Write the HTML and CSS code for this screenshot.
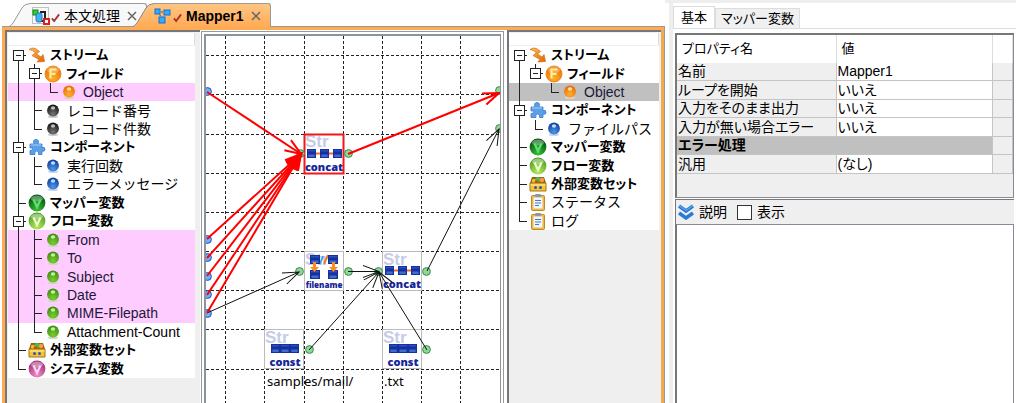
FILE: index.html
```
<!DOCTYPE html>
<html lang="ja">
<head>
    <meta charset="UTF-8">
    <meta name="viewport" content="width=device-width, initial-scale=1.0">
    <title>Mapper1</title>
    <link rel="stylesheet" href="styles.css">
</head>
<body>
    <!-- アイコン定義 -->
    <svg class="defs" width="0" height="0" aria-hidden="true">
        <defs>
            <radialGradient id="gOrange" cx="50%" cy="75%" r="75%"><stop offset="0" stop-color="#ffb030"/><stop offset="1" stop-color="#e86a00"/></radialGradient>
            <radialGradient id="gBlack" cx="50%" cy="80%" r="75%"><stop offset="0" stop-color="#777"/><stop offset="1" stop-color="#151515"/></radialGradient>
            <radialGradient id="gBlue" cx="50%" cy="80%" r="75%"><stop offset="0" stop-color="#4c98ec"/><stop offset="1" stop-color="#12409c"/></radialGradient>
            <radialGradient id="gGreen" cx="50%" cy="80%" r="75%"><stop offset="0" stop-color="#7ecb30"/><stop offset="1" stop-color="#3c9014"/></radialGradient>
            <radialGradient id="gDark" cx="50%" cy="85%" r="80%"><stop offset="0" stop-color="#35c035"/><stop offset="1" stop-color="#04500c"/></radialGradient>
            <radialGradient id="gLime" cx="50%" cy="85%" r="80%"><stop offset="0" stop-color="#b4ea60"/><stop offset="1" stop-color="#4c9c20"/></radialGradient>
            <radialGradient id="gPink" cx="50%" cy="85%" r="80%"><stop offset="0" stop-color="#f090c8"/><stop offset="1" stop-color="#a02878"/></radialGradient>
            <linearGradient id="gStream" x1="0" y1="0" x2="1" y2="1"><stop offset="0" stop-color="#ffc060"/><stop offset="1" stop-color="#e06400"/></linearGradient>
            <linearGradient id="gTab" x1="0" y1="0" x2="0" y2="1"><stop offset="0" stop-color="#ffc684"/><stop offset="1" stop-color="#ffab55"/></linearGradient>
            <linearGradient id="gBox" x1="0" y1="0" x2="0" y2="1"><stop offset="0" stop-color="#1230a0"/><stop offset="1" stop-color="#5a90e0"/></linearGradient>
        </defs>
        <symbol id="ball-orange" viewBox="0 0 12 14"><ellipse cx="6" cy="12.500" rx="5" ry="1.500" fill="#e0d0c8"/><circle cx="6" cy="6.500" r="5.900" fill="url(#gOrange)"/><ellipse cx="6" cy="4" rx="2.200" ry="1.700" fill="#ffe0a0"/></symbol>
        <symbol id="ball-black" viewBox="0 0 12 14"><ellipse cx="6" cy="12.500" rx="5" ry="1.500" fill="#ccc"/><circle cx="6" cy="6.500" r="5.900" fill="url(#gBlack)"/><ellipse cx="6" cy="4" rx="2.200" ry="1.700" fill="#bbb"/></symbol>
        <symbol id="ball-blue" viewBox="0 0 12 14"><ellipse cx="6" cy="12.500" rx="5" ry="1.500" fill="#c8d4e8"/><circle cx="6" cy="6.500" r="5.900" fill="url(#gBlue)"/><ellipse cx="6" cy="4" rx="2.200" ry="1.700" fill="#bcdcff"/></symbol>
        <symbol id="ball-green" viewBox="0 0 12 14"><ellipse cx="6" cy="12.500" rx="5" ry="1.500" fill="#ccd8c0"/><circle cx="6" cy="6.500" r="5.900" fill="url(#gGreen)"/><ellipse cx="6" cy="4" rx="2.200" ry="1.700" fill="#c8f0a0"/></symbol>
        <symbol id="field" viewBox="0 0 18 18"><circle cx="9" cy="9" r="8" fill="url(#gOrange)" stroke="#f08a20"/><ellipse cx="9" cy="5" rx="6" ry="3.5" fill="#fff" opacity=".3"/><path d="M6.5 13.5V4.5H12.5M6.5 9H11.5" fill="none" stroke="#ffef90" stroke-width="2.2"/></symbol>
        <symbol id="var-dark" viewBox="0 0 18 18"><circle cx="9" cy="9" r="8.4" fill="url(#gDark)"/><ellipse cx="9" cy="4.5" rx="6" ry="3" fill="#fff" opacity=".35"/><path d="M5.5 5.5L9 13L12.5 5.5" fill="none" stroke="#5be070" stroke-width="2.4"/></symbol>
        <symbol id="var-lime" viewBox="0 0 18 18"><circle cx="9" cy="9" r="8.4" fill="url(#gLime)"/><ellipse cx="9" cy="4.5" rx="6" ry="3" fill="#fff" opacity=".4"/><path d="M5.5 5.5L9 13L12.5 5.5" fill="none" stroke="#f0ffc8" stroke-width="2.2"/></symbol>
        <symbol id="var-pink" viewBox="0 0 18 18"><circle cx="9" cy="9" r="8.4" fill="url(#gPink)"/><ellipse cx="9" cy="4.5" rx="6" ry="3" fill="#fff" opacity=".4"/><path d="M5.5 5.5L9 13L12.5 5.5" fill="none" stroke="#ffd8f4" stroke-width="2.2"/></symbol>
        <symbol id="stream" viewBox="0 0 18 18"><path d="M1 3.500Q4 1 7.500 2.500L11.500 5.500L8.500 8L13 11L15 8.500L16.500 15.500L9 16L11 13.500L4 9.500L7.500 6.800Q4.500 4 1 3.500Z" fill="url(#gStream)" stroke="#d86a10" stroke-width=".7"/></symbol>
        <symbol id="puzzle" viewBox="0 0 18 18"><path d="M2 6H6Q4.500 1.500 8 1.500Q11.500 1.500 10 6H14V9.500Q17 8.500 17 11.500Q17 14 14 13V16.500H10.500Q11.500 13 8.500 13Q6 13 7 16.500H2V12.500Q4.500 13 4.500 11Q4.500 9 2 10Z" fill="#5b9fe8" stroke="#3a78cc" stroke-width=".8"/><path d="M3 7H13" stroke="#a8d0f8"/></symbol>
        <symbol id="chest" viewBox="0 0 18 18"><path d="M3 2H15L17 8H1Z" fill="#8c6418"/><circle cx="5" cy="6" r="2.200" fill="#f0c020"/><circle cx="9" cy="4.500" r="2.500" fill="#48c048"/><circle cx="13" cy="5" r="2.200" fill="#ff9a40"/><circle cx="7.500" cy="7" r="1.800" fill="#e03a28"/><path d="M1 8H17V16H1Z" fill="#f2c434" stroke="#a87410"/><path d="M1.500 10H16.500" stroke="#fff09a"/><circle cx="6.500" cy="12.500" r="1.500" fill="#3a50c0"/><circle cx="11.500" cy="12.500" r="1.500" fill="#3a50c0"/></symbol>
        <symbol id="clip" viewBox="0 0 18 18"><rect x="2.500" y="2.500" width="13" height="15" rx="1" fill="#eeb844" stroke="#c08a20"/><rect x="4.500" y="4.500" width="9" height="11" fill="#eef6ff"/><rect x="6" y="1" width="6" height="3" rx="1" fill="#8898b0"/><path d="M6 7.500H12M6 10H12M6 12.500H10" stroke="#4878c0"/></symbol>
        <symbol id="check" viewBox="0 0 10 10"><path d="M1 5.500L3.500 8.500L9 1" fill="none" stroke="#a83030" stroke-width="2"/></symbol>
        <symbol id="close" viewBox="0 0 10 10"><path d="M1 1L9 9M9 1L1 9" fill="none" stroke="#666" stroke-width="1.500"/></symbol>
        <symbol id="node-box" viewBox="0 0 10 10" preserveAspectRatio="none"><path d="M0 0H10V10H0Z" fill="#1530a0"/><path d="M1.500 5H8.500V8.500H1.500Z" fill="url(#gBox)"/><path d="M1 2H9" stroke="#3c62cc"/></symbol>
        <symbol id="port" viewBox="0 0 9 9"><circle cx="4.500" cy="4.500" r="3.900" fill="#8fd89a" stroke="#3b8a4c"/></symbol>
        <symbol id="port-in" viewBox="0 0 9 9"><circle cx="4.500" cy="4.500" r="3.900" fill="#6cb0ff" stroke="#1c50c0"/></symbol>
    </svg>

    <div class="app">
        <div class="editor">
            <div class="tabs">
                <div class="tab">
                    <svg class="slope" viewBox="0 0 22 24"><path d="M0 24Q3 23 5 20L14 5Q16 1 22 .5V24Z" fill="#f8f8f8"/><path d="M0 24Q3 23 5 20L14 5Q16 1 22 .5" fill="none" stroke="#999"/></svg>
                    <div class="tab-body">
                        <svg width="18" height="18" viewBox="0 0 18 18"><path d="M.5 .5H16.500V16.500H.5Z" fill="none" stroke="#888" stroke-dasharray="1 1"/><path d="M8 5H13V14H8" fill="none" stroke="#222" stroke-width="2"/><rect x="1" y="3" width="5" height="5" fill="#30d030" stroke="#108810"/><rect x="4" y="6" width="6" height="9" rx="2" fill="#48b0f0" stroke="#1878c0"/><rect x="12" y="12" width="5" height="5" fill="#fff" stroke="#d82020" stroke-width="2"/></svg>
                        <svg class="check" width="9" height="10"><use href="#check"/></svg>
                        <span class="tab-name">本文処理</span>
                        <button class="tab-close" aria-label="閉じる"><svg width="10" height="10"><use href="#close"/></svg></button>
                    </div>
                </div>
                <div class="tab active">
                    <svg class="slope" viewBox="0 0 22 24"><path d="M0 24Q3 23 5 20L14 5Q16 1 22 .5V24Z" fill="url(#gTab)"/><path d="M0 24Q3 23 5 20L14 5Q16 1 22 .5" fill="none" stroke="#888"/></svg>
                    <div class="tab-body">
                        <svg width="18" height="18" viewBox="0 0 18 18"><path d="M4 5H13M4 5L9 13" stroke="#555" stroke-dasharray="2 1"/><rect x="1" y="2" width="5" height="5" fill="#38a8f8" stroke="#1070d0"/><rect x="10" y="3" width="6" height="5" fill="#38a8f8" stroke="#1070d0"/><rect x="5" y="10" width="6" height="6" fill="#38a8f8" stroke="#1070d0"/></svg>
                        <svg class="check" width="9" height="10"><use href="#check"/></svg>
                        <span class="tab-name">Mapper1</span>
                        <button class="tab-close" aria-label="閉じる"><svg width="10" height="10"><use href="#close"/></svg></button>
                    </div>
                </div>
            </div>

            <div class="frame">
                <!-- 入力ツリー -->
                <div class="side side-in">
                    <input class="filter" type="text" aria-label="入力フィルタ">
                    <ul class="tree tree-in">
                        <li class="group"><i class="cell box down"></i><svg class="icon"><use href="#stream"/></svg><span>ストリーム</span></li>
                        <li class="group"><i class="cell bar"></i><i class="cell box up down"></i><svg class="icon"><use href="#field"/></svg><span>フィールド</span></li>
                        <li class="marked"><i class="cell bar"></i><i class="cell bar"></i><i class="cell end"></i><svg class="ball"><use href="#ball-orange"/></svg><span>Object</span></li>
                        <li><i class="cell bar"></i><i class="cell tee"></i><svg class="ball"><use href="#ball-black"/></svg><span>レコード番号</span></li>
                        <li><i class="cell bar"></i><i class="cell end"></i><svg class="ball"><use href="#ball-black"/></svg><span>レコード件数</span></li>
                        <li class="group"><i class="cell box up down"></i><svg class="icon"><use href="#puzzle"/></svg><span>コンポーネント</span></li>
                        <li><i class="cell bar"></i><i class="cell tee"></i><svg class="ball"><use href="#ball-blue"/></svg><span>実行回数</span></li>
                        <li><i class="cell bar"></i><i class="cell end"></i><svg class="ball"><use href="#ball-blue"/></svg><span>エラーメッセージ</span></li>
                        <li class="group"><i class="cell tee"></i><svg class="icon"><use href="#var-dark"/></svg><span>マッパー変数</span></li>
                        <li class="group"><i class="cell box up down"></i><svg class="icon"><use href="#var-lime"/></svg><span>フロー変数</span></li>
                        <li class="marked"><i class="cell bar"></i><i class="cell tee"></i><svg class="ball"><use href="#ball-green"/></svg><span>From</span></li>
                        <li class="marked"><i class="cell bar"></i><i class="cell tee"></i><svg class="ball"><use href="#ball-green"/></svg><span>To</span></li>
                        <li class="marked"><i class="cell bar"></i><i class="cell tee"></i><svg class="ball"><use href="#ball-green"/></svg><span>Subject</span></li>
                        <li class="marked"><i class="cell bar"></i><i class="cell tee"></i><svg class="ball"><use href="#ball-green"/></svg><span>Date</span></li>
                        <li class="marked"><i class="cell bar"></i><i class="cell tee"></i><svg class="ball"><use href="#ball-green"/></svg><span>MIME-Filepath</span></li>
                        <li><i class="cell bar"></i><i class="cell end"></i><svg class="ball"><use href="#ball-green"/></svg><span>Attachment-Count</span></li>
                        <li class="group"><i class="cell tee"></i><svg class="icon"><use href="#chest"/></svg><span>外部変数セット</span></li>
                        <li class="group"><i class="cell end"></i><svg class="icon"><use href="#var-pink"/></svg><span>システム変数</span></li>
                    </ul>
                </div>

                <!-- マッピング -->
                <div class="canvas">
                    <svg width="294" height="367" viewBox="206 36 294 367">
                        <defs>
                            <marker id="arrow" markerUnits="userSpaceOnUse" markerWidth="36" markerHeight="20" refX="17" refY="8" orient="auto"><path d="M1 2L17 8L1 14" fill="none" stroke="#111"/></marker>
                            <marker id="arrowRed" markerUnits="userSpaceOnUse" markerWidth="36" markerHeight="20" refX="17" refY="8" orient="auto"><path d="M1 2L17 8L1 14" fill="none" stroke="#f00" stroke-width="2"/></marker>
                        </defs>
                        <path class="grid" d="M225.500 36V403M264.500 36V403M304.500 36V403M343.500 36V403M382.500 36V403M421.500 36V403M460.500 36V403"/>
                        <path class="grid" d="M206 55.500H500M206 94.500H500M206 134.500H500M206 173.500H500M206 212.500H500M206 251.500H500M206 290.500H500M206 329.500H500M206 369.500H500"/>

                        <!-- concat -->
                        <rect class="node" x="304.500" y="134.500" width="39" height="39"/>
                        <text class="str" x="305" y="147">Str</text>
                        <path d="M312 153.500H338" stroke="#f06a20" stroke-width="2"/>
                        <use href="#node-box" x="307" y="149" width="9" height="9"/><use href="#node-box" x="320" y="149" width="9" height="9"/><use href="#node-box" x="333" y="149" width="9" height="9"/>
                        <text class="kind" x="324" y="171">concat</text>
                        <rect x="304.500" y="134.500" width="39" height="39" fill="none" stroke="#f01818" stroke-width="2"/>

                        <!-- filename -->
                        <rect class="node" x="304.500" y="251.500" width="39" height="39"/>
                        <text class="str" x="305" y="265">Str</text>
                        <path d="M324 264L328 255" stroke="#f07a20" stroke-width="2"/>
                        <path d="M320 264L323 256" stroke="#38a0f0" stroke-width="2"/>
                        <use href="#node-box" x="310" y="255" width="10" height="9"/><use href="#node-box" x="328" y="255" width="10" height="9"/>
                        <use href="#node-box" x="310" y="270" width="10" height="9"/><use href="#node-box" x="328" y="270" width="10" height="9"/>
                        <path d="M313 262H316V267H319L314.500 272L310 267H313ZM332 262H335V267H338L333.500 272L329 267H332Z" fill="#ff8c1c"/>
                        <text class="kind small" x="324" y="288">filename</text>

                        <!-- concat -->
                        <rect class="node" x="382.500" y="251.500" width="39" height="39"/>
                        <text class="str" x="383" y="265">Str</text>
                        <path d="M390 270.500H416" stroke="#f06a20" stroke-width="2"/>
                        <use href="#node-box" x="385" y="266" width="9" height="9"/><use href="#node-box" x="398" y="266" width="9" height="9"/><use href="#node-box" x="411" y="266" width="9" height="9"/>
                        <text class="kind" x="402" y="288">concat</text>

                        <!-- const -->
                        <rect class="node" x="264.500" y="329.500" width="39" height="39"/>
                        <text class="str" x="265" y="343">Str</text>
                        <use href="#node-box" x="271" y="344" width="9" height="9"/><use href="#node-box" x="280" y="344" width="10" height="9"/><use href="#node-box" x="290" y="344" width="9" height="9"/>
                        <text class="kind" x="285" y="366">const</text>
                        <text class="value" x="267" y="386">samples/mail/</text>

                        <rect class="node" x="382.500" y="329.500" width="39" height="39"/>
                        <text class="str" x="383" y="343">Str</text>
                        <use href="#node-box" x="389" y="344" width="9" height="9"/><use href="#node-box" x="398" y="344" width="10" height="9"/><use href="#node-box" x="408" y="344" width="9" height="9"/>
                        <text class="kind" x="403" y="366">const</text>
                        <text class="value" x="384" y="386">.txt</text>

                        <!-- ポート -->
                        <g>
                            <use href="#port-in" x="203" y="87" width="9" height="9"/><use href="#port-in" x="203" y="235" width="9" height="9"/><use href="#port-in" x="203" y="253" width="9" height="9"/><use href="#port-in" x="203" y="272" width="9" height="9"/><use href="#port-in" x="203" y="290" width="9" height="9"/><use href="#port-in" x="203" y="309" width="9" height="9"/>
                            <use href="#port" x="296" y="149" width="9" height="9"/><use href="#port" x="344" y="149" width="9" height="9"/>
                            <use href="#port" x="295" y="267" width="9" height="9"/><use href="#port" x="344" y="267" width="9" height="9"/>
                            <use href="#port" x="374" y="267" width="9" height="9"/><use href="#port" x="422" y="267" width="9" height="9"/>
                            <use href="#port" x="305" y="345" width="9" height="9"/><use href="#port" x="422" y="345" width="9" height="9"/>
                            <use href="#port" x="495" y="86" width="9" height="9"/><use href="#port" x="495" y="124" width="9" height="9"/>
                        </g>

                        <!-- 接続線 -->
                        <g class="link">
                            <path d="M207 313L299 272"/>
                            <path d="M348 271.500H379"/>
                            <path d="M309 350L379 272"/>
                            <path d="M427 350L379 272"/>
                            <path d="M427 271L499 129"/>
                        </g>
                        <g class="link hot">
                            <path d="M207 92L301 154"/>
                            <path d="M207 239L301 154"/>
                            <path d="M207 258L301 154"/>
                            <path d="M207 276L301 154"/>
                            <path d="M207 295L301 154"/>
                            <path d="M207 313L301 154"/>
                            <path d="M348 154L499 93"/>
                        </g>
                    </svg>
                </div>

                <!-- 出力ツリー -->
                <div class="side side-out">
                    <input class="filter" type="text" aria-label="出力フィルタ">
                    <ul class="tree tree-out">
                        <li class="group"><i class="cell box down"></i><svg class="icon"><use href="#stream"/></svg><span>ストリーム</span></li>
                        <li class="group"><i class="cell bar"></i><i class="cell box up"></i><svg class="icon"><use href="#field"/></svg><span>フィールド</span></li>
                        <li class="selected"><i class="cell bar"></i><i class="cell"></i><i class="cell end"></i><svg class="ball"><use href="#ball-orange"/></svg><span>Object</span></li>
                        <li class="group"><i class="cell box up down"></i><svg class="icon"><use href="#puzzle"/></svg><span>コンポーネント</span></li>
                        <li><i class="cell bar"></i><i class="cell end"></i><svg class="ball"><use href="#ball-blue"/></svg><span>ファイルパス</span></li>
                        <li class="group"><i class="cell tee"></i><svg class="icon"><use href="#var-dark"/></svg><span>マッパー変数</span></li>
                        <li class="group"><i class="cell tee"></i><svg class="icon"><use href="#var-lime"/></svg><span>フロー変数</span></li>
                        <li class="group"><i class="cell tee"></i><svg class="icon"><use href="#chest"/></svg><span>外部変数セット</span></li>
                        <li><i class="cell tee"></i><svg class="icon"><use href="#clip"/></svg><span>ステータス</span></li>
                        <li><i class="cell end"></i><svg class="icon"><use href="#clip"/></svg><span>ログ</span></li>
                    </ul>
                </div>
            </div>
        </div>

        <!-- プロパティ -->
        <div class="props">
            <div class="prop-tabs">
                <button class="prop-tab current">基本</button>
                <button class="prop-tab">マッパー変数</button>
            </div>
            <div class="prop-box">
                <table class="prop-table">
                    <colgroup><col class="col-name"><col><col class="col-more"></colgroup>
                    <thead>
                        <tr><th>プロパティ名</th><th>値</th><th></th></tr>
                    </thead>
                    <tbody>
                        <tr><td>名前</td><td>Mapper1</td><td></td></tr>
                        <tr><td>ループを開始</td><td>いいえ</td><td></td></tr>
                        <tr><td>入力をそのまま出力</td><td>いいえ</td><td></td></tr>
                        <tr><td>入力が無い場合エラー</td><td>いいえ</td><td></td></tr>
                        <tr class="section"><td colspan="2">エラー処理</td><td></td></tr>
                        <tr><td>汎用</td><td>(なし)</td><td></td></tr>
                    </tbody>
                </table>
            </div>
            <div class="desc-bar">
                <svg width="16" height="16" viewBox="0 0 16 16"><path d="M1 2L8 7L15 2M1 9L8 14L15 9" fill="none" stroke="#2a7ad8" stroke-width="3.500"/><path d="M1 1.500L8 6.500L15 1.500" fill="none" stroke="#6cb4f8"/></svg>
                <span>説明</span>
                <input type="checkbox" id="showDesc">
                <label for="showDesc">表示</label>
            </div>
            <div class="desc-text"></div>
        </div>
    </div>
</body>
</html>
```
FILE: styles.css
```
* {
    box-sizing: border-box;
}

body {
    margin: 0;
    background-color: #fff;
    color: #000;
    font-family: "Liberation Sans", "Noto Sans CJK JP", sans-serif;
    font-size: 14px;
    line-height: 18px;
}

.defs {
    display: block;
}

.app {
    display: flex;
    height: 100vh;
    overflow: hidden;
}

/* エディタ */
.editor {
    display: flex;
    flex-direction: column;
    flex: 1;
    min-width: 0;
    padding: 3px 0 0 2px;
}

.tabs {
    display: flex;
    height: 24px;
    padding-left: 6px;
    margin-bottom: -1px;
}

.tab {
    display: flex;
}

.tab.active {
    margin-left: -15px;
    z-index: 1;
}

.slope {
    width: 22px;
    height: 24px;
}

.tab-body {
    display: flex;
    align-items: center;
    padding: 0 9px 0 2px;
    border-top: 1px solid #999;
    border-right: 1px solid #999;
    border-radius: 0 3px 0 0;
    background-color: #f8f8f8;
}

.active .tab-body {
    padding-left: 0;
    background: linear-gradient(#ffc684, #ffab55);
}

.check {
    margin: 4px 4px 0 1px;
}

.active .tab-name {
    font-weight: bold;
}

.tab-close {
    display: flex;
    margin-left: 7px;
    padding: 0;
    border: none;
    background: none;
}

.frame {
    display: flex;
    flex: 1;
    min-height: 0;
    border-top: 1px solid #999;
    border-right: 1px solid #999;
    box-shadow: inset 3px 3px #ffab55, inset -3px 0 #f4a850;
    padding: 3px 3px 0 3px;
}

.side {
    display: flex;
    flex-direction: column;
    border-top: 2px solid #777;
    border-left: 2px solid #777;
    background-color: #efefef;
}

.side-in {
    width: 195px;
    padding: 1px 5px 0 1px;
}

.side-out {
    width: 154px;
    padding: 1px 2px 0 0;
}

.filter {
    width: 100%;
    height: 12px;
    margin-bottom: 1px;
    padding: 0;
    border: none;
    border-right: 1px solid #ddd;
    background-color: #fff;
    outline: none;
}

/* ツリー */
.tree {
    display: grid;
    grid-auto-rows: 1fr;
    margin: 0;
    padding: 0;
    list-style: none;
    background-color: #fff;
}

.tree-in {
    height: 332px;
}

.tree-out {
    height: 184px;
}

.tree li {
    display: flex;
    align-items: center;
    min-height: 0;
    padding-left: 2px;
    white-space: nowrap;
}

.tree .group {
    font-size: 13px;
    font-weight: bold;
    font-feature-settings: "palt";
}

.tree .marked {
    background-color: #fcf;
    color: #201838;
}

.tree .selected {
    background-color: #c0c0c0;
    color: #181838;
}

.icon {
    width: 18px;
    height: 18px;
    margin: 0 4px 0 2px;
}

.ball {
    width: 12px;
    height: 14px;
    margin: 0 8px 0 5px;
}

/* ツリーの罫線 */
.cell {
    width: 16px;
    height: 100%;
    background-repeat: no-repeat;
}

.bar {
    background-image: linear-gradient(#222, #222);
    background-size: 1px 100%;
    background-position: 8px 0;
}

.tee {
    background-image: linear-gradient(#222, #222), linear-gradient(#222, #222);
    background-size: 1px 100%, 8px 1px;
    background-position: 8px 0, 8px 9px;
}

.end {
    background-image: linear-gradient(#222, #222), linear-gradient(#222, #222);
    background-size: 1px 10px, 8px 1px;
    background-position: 8px 0, 8px 9px;
}

.box {
    display: grid;
    grid-template-rows: 4px 11px 1fr;
    justify-items: end;
    background-image: linear-gradient(#222, #222), linear-gradient(#fff, #fff), linear-gradient(#222, #222), linear-gradient(#222, #222);
    background-size: 5px 1px, 9px 9px, 11px 11px, 8px 1px;
    background-position: 6px 9px, 4px 5px, 3px 4px, 8px 9px;
}

.box::before,
.box::after {
    content: "";
    width: 1px;
    margin-right: 7px;
}

.box::before {
    grid-row: 1;
}

.box::after {
    grid-row: 3;
}

.box.up::before,
.box.down::after {
    background-color: #222;
}

/* キャンバス */
.canvas {
    flex: 1;
    min-width: 0;
    margin: 4px 6px 0 4px;
    overflow: hidden;
    border-style: solid;
    border-color: #8c939c;
    border-width: 2px 1px 0 2px;
    outline: 1px solid #999;
    outline-offset: 2px;
}

.canvas svg {
    display: block;
}

.grid {
    fill: none;
    stroke: #222;
    stroke-dasharray: 3 2;
}

.node {
    fill: #fff;
    stroke: #bbb;
}

.str {
    fill: #c6cce8;
    font-size: 17px;
    font-weight: bold;
}

.kind {
    fill: #16269a;
    font-family: "Open Sans", sans-serif;
    font-size: 11px;
    font-weight: 800;
    text-anchor: middle;
}

.kind.small {
    font-size: 8px;
}

.value {
    font-family: "Noto Sans", sans-serif;
    font-size: 13px;
}

.link {
    fill: none;
    stroke: #111;
}

.link path {
    marker-end: url(#arrow);
}

.link.hot {
    stroke: #f00;
    stroke-width: 2px;
}

.hot path {
    marker-end: url(#arrowRed);
}

/* プロパティ */
.props {
    display: flex;
    flex-direction: column;
    width: 351px;
    border-top: 3px solid #eee;
    padding: 3px 2px 0 10px;
    background: linear-gradient(90deg, #fff 4px, #eee 4px, #eee 8px, #fff 8px);
}

.prop-tabs {
    display: flex;
    align-items: flex-end;
    margin: 0 -2px 4px -2px;
    border-bottom: 1px solid #ddd;
}

.prop-tab {
    height: 20px;
    padding: 0 5px;
    border: 1px solid #ddd;
    border-bottom: none;
    background-color: #f0f0f0;
    color: #000;
    font: inherit;
    font-size: 13px;
    font-feature-settings: "palt";
}

.prop-tab.current {
    height: 22px;
    padding: 0 7px;
    background-color: #fff;
}

.prop-box {
    height: 165px;
    border: 1px solid #889;
    border-top: 2px solid #777;
    border-left: 2px solid #777;
    background-color: #efefef;
}

.prop-table {
    width: 100%;
    height: 139px;
    table-layout: fixed;
    border-collapse: collapse;
}

.col-name {
    width: 159px;
}

.col-more {
    width: 20px;
}

.prop-table th {
    height: 28px;
    padding: 0 5px;
    border-right: 1px solid #ddd;
    background-color: #fff;
    font-size: 13px;
    font-weight: normal;
    text-align: left;
    font-feature-settings: "palt";
}

.prop-table td {
    padding: 0 1px;
    border-right: 1px solid #c4c4c4;
    border-bottom: 1px solid #c4c4c4;
    line-height: 17px;
    white-space: nowrap;
    font-feature-settings: "palt";
}

.prop-table td:nth-child(2) {
    background-color: #fff;
}

.prop-table .section td:first-child {
    background-color: #c0c0c0;
    font-weight: bold;
}

.prop-table .section td:last-child {
    background-color: #efefef;
}

.desc-bar {
    display: flex;
    align-items: center;
    height: 25px;
    margin-top: 1px;
    padding-left: 2px;
    border-top: 1px solid #777;
    border-left: 1px solid #777;
    background-color: #efefef;
}

.desc-bar span {
    margin: 0 10px 0 5px;
}

.desc-bar input {
    appearance: none;
    width: 15px;
    height: 15px;
    margin: 0 5px 0 0;
    border: 1px solid #333;
    background-color: #fff;
}

.desc-text {
    flex: 1;
    border: 1px solid #889;
    border-left: 2px solid #777;
    border-bottom: none;
    background-color: #fff;
}
```
